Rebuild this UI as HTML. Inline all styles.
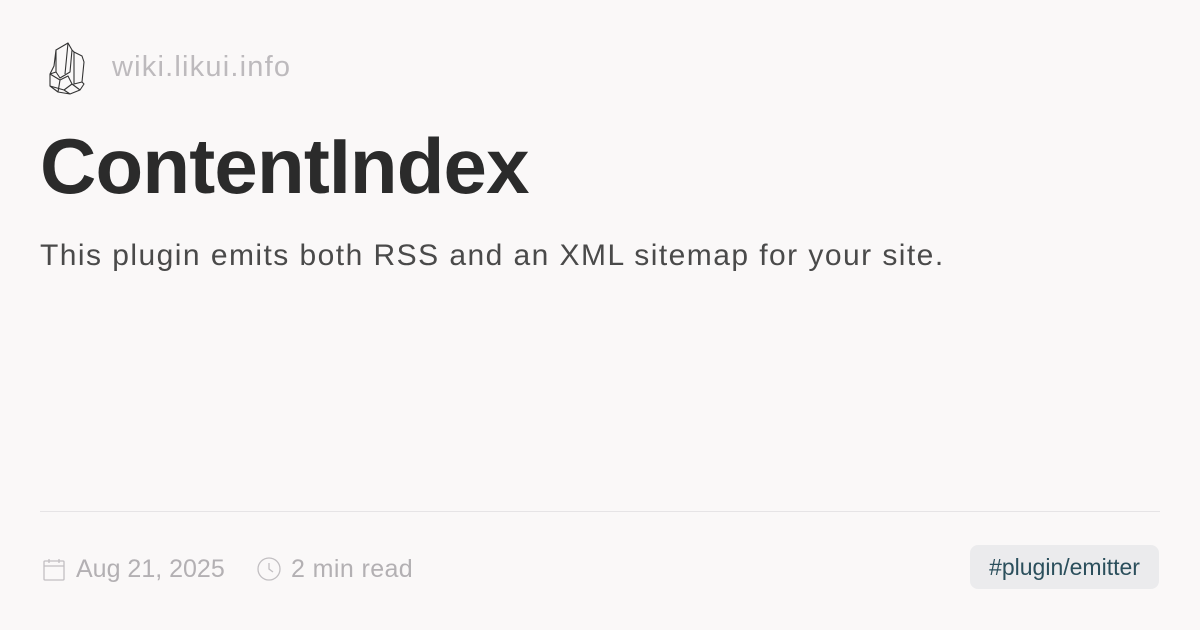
<!DOCTYPE html>
<html><head><meta charset="utf-8"><style>
html,body{margin:0;padding:0;}
body{width:1200px;height:630px;background:#faf8f8;position:relative;overflow:hidden;font-family:"Liberation Sans",sans-serif;}
.logo{position:absolute;left:46px;top:42px;}
.site{position:absolute;left:112px;top:51px;font-size:29px;color:#bdbabd;letter-spacing:1.2px;}
h1{position:absolute;left:40px;top:121px;margin:0;font-size:78px;font-weight:bold;color:#2b2b2b;letter-spacing:-0.8px;}
.desc{position:absolute;left:40px;top:239px;font-size:30px;color:#4a4a4a;letter-spacing:1.45px;}
.hr{position:absolute;left:40px;right:40px;top:511px;height:1px;background:#e6e4e6;}
.meta{position:absolute;top:555px;font-size:25px;color:#b3b0b3;}
.tag{position:absolute;left:970px;top:545px;width:189px;height:44px;background:#ebebed;border-radius:8px;color:#2b4f5c;font-size:23px;line-height:44px;text-align:center;}
</style></head><body>
<svg class="logo" width="42" height="54" viewBox="0 0 42 54" fill="none" stroke="#333" stroke-width="1.1" stroke-linejoin="round">
<path d="M10 8 L22 1 L26 8 L24 30 L14 36 L10 30 Z M22 1 L19 32 M26 8 L28 10 M28 10 L36 14 L38 20 L36 40 L28 42 L28 10 M10 30 L4 32 L4 44 L12 50 L24 52 L34 48 L38 42 L36 40 M4 32 L14 38 L22 34 L26 42 L18 48 L4 44 M14 38 L12 50 M18 48 L24 52 M26 42 L34 48 M10 8 L8 24 L4 32"/>
</svg>
<div class="site">wiki.likui.info</div>
<h1>ContentIndex</h1>
<div class="desc">This plugin emits both RSS and an XML sitemap for your site.</div>
<div class="hr"></div>
<svg style="position:absolute;left:43px;top:558px" width="22" height="24" viewBox="0 0 22 24" fill="none" stroke="#c2bfc2" stroke-width="1.3"><rect x="1" y="3" width="20" height="19" rx="1"/><path d="M1 8 H21 M6 1 V5 M16 1 V5"/></svg>
<div class="meta" style="left:76px">Aug 21, 2025</div>
<svg style="position:absolute;left:257px;top:557px" width="24" height="24" viewBox="0 0 24 24" fill="none" stroke="#c2bfc2" stroke-width="1.3"><circle cx="12" cy="12" r="11"/><path d="M12 6 V12 L16 15"/></svg>
<div class="meta" style="left:291px;letter-spacing:0.4px">2 min read</div>
<div class="tag">#plugin/emitter</div>
</body></html>
